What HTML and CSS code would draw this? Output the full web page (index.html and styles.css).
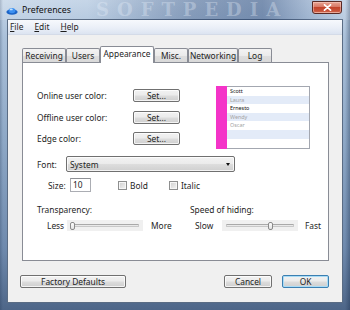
FILE: index.html
```html
<!DOCTYPE html>
<html>
<head>
<meta charset="utf-8">
<link rel="stylesheet" href="styles.css">
</head>
<body>
<div class="window">
  <div class="titlebar">
    <svg class="app-icon" width="12" height="8" viewBox="0 0 12 8">
      <ellipse cx="6" cy="5" rx="5.6" ry="2.8" fill="#1b63c6"/>
      <ellipse cx="6" cy="3.6" rx="3.4" ry="2.6" fill="#3b8ff0"/>
      <ellipse cx="5.2" cy="2.4" rx="1.6" ry="0.9" fill="#bfe0ff"/>
    </svg>
    <span class="title">Preferences</span>
    <span class="watermark">SOFTPEDIA</span>
    <button class="close" aria-label="Close">
      <svg width="9" height="7" viewBox="0 0 9 7"><path d="M1.5 0.8 L7.5 6.2 M7.5 0.8 L1.5 6.2" stroke="#fff" stroke-width="1.7" stroke-linecap="round"/></svg>
    </button>
  </div>
  <div class="client">
    <div class="menubar">
      <span class="menu-item"><u>F</u>ile</span>
      <span class="menu-item"><u>E</u>dit</span>
      <span class="menu-item"><u>H</u>elp</span>
    </div>
    <div class="body">
      <div class="tabs">
        <span class="tab t-receiving">Receiving</span>
        <span class="tab t-users">Users</span>
        <span class="tab t-appearance active">Appearance</span>
        <span class="tab t-misc">Misc.</span>
        <span class="tab t-networking">Networking</span>
        <span class="tab t-log">Log</span>
      </div>
      <div class="panel">
        <div class="colors-section">
          <div class="color-rows">
            <div class="color-row"><span class="row-label">Online user color:</span><button class="btn set-btn">Set...</button></div>
            <div class="color-row"><span class="row-label">Offline user color:</span><button class="btn set-btn">Set...</button></div>
            <div class="color-row"><span class="row-label">Edge color:</span><button class="btn set-btn">Set...</button></div>
          </div>
          <div class="preview">
            <div class="edge"></div>
            <ul class="user-list">
              <li class="on">Scott</li>
              <li class="off alt">Laura</li>
              <li class="on">Ernesto</li>
              <li class="off alt">Wendy</li>
              <li class="off">Oscar</li>
              <li class="alt"></li>
              <li></li>
            </ul>
          </div>
        </div>
        <div class="font-row">
          <span class="font-label">Font:</span>
          <div class="combo"><span>System</span><span class="arrow"></span></div>
        </div>
        <div class="size-row">
          <span class="size-label">Size:</span>
          <span class="size-input">10</span>
          <label class="check bold-check"><span class="box"></span>Bold</label>
          <label class="check"><span class="box"></span>Italic</label>
        </div>
        <div class="sliders">
          <div class="slider-group first">
            <div class="slider-title">Transparency:</div>
            <div class="slider-row">
              <span class="end-label less">Less</span>
              <div class="track"><span class="line"></span><span class="thumb" style="left:3px"></span></div>
              <span class="end-label more">More</span>
            </div>
          </div>
          <div class="slider-group second">
            <div class="slider-title">Speed of hiding:</div>
            <div class="slider-row">
              <span class="end-label slow">Slow</span>
              <div class="track"><span class="line"></span><span class="thumb" style="left:46px"></span></div>
              <span class="end-label fast">Fast</span>
            </div>
          </div>
        </div>
      </div>
      <div class="footer">
        <button class="btn factory">Factory Defaults</button>
        <span class="spacer"></span>
        <button class="btn cancel">Cancel</button>
        <button class="btn ok">OK</button>
      </div>
    </div>
  </div>
</div>
</body>
</html>
```

FILE: styles.css
```css
* { box-sizing: border-box; }
html, body { margin: 0; padding: 0; }
body {
  width: 350px;
  height: 310px;
  overflow: hidden;
  font-family: "Noto Sans", "DejaVu Sans", sans-serif;
  font-size: 8.4px;
  color: #1e1e1e;
  background: #5a7396;
}
button { font: inherit; color: inherit; padding: 0; margin: 0; }

.window {
  position: relative;
  width: 350px;
  height: 310px;
  display: flex;
  flex-direction: column;
  background:
    linear-gradient(90deg, rgba(30,50,80,.25) 0, rgba(30,50,80,0) 3px, rgba(0,0,0,0) 345px, rgba(20,40,70,.35) 350px),
    linear-gradient(180deg, #c6d6e8 0%, #aac0d9 12%, #8ea8c6 45%, #6f8aad 80%, #4e6688 100%);
}

/* title bar */
.titlebar {
  position: relative;
  height: 20px;
  display: flex;
  align-items: center;
  padding-left: 6px;
  overflow: hidden;
  background: linear-gradient(90deg, rgba(255,255,255,.15) 0%, rgba(255,255,255,0) 25%, rgba(30,60,110,.35) 55%, rgba(30,60,110,.45) 75%, rgba(60,90,140,.2) 88%, rgba(255,255,255,.1) 100%);
}
.app-icon { flex: none; margin-top: 1px; }
.title {
  margin-left: 4px;
  font-size: 8.8px;
  color: #111;
  position: relative;
  z-index: 1;
}
.watermark {
  position: absolute;
  left: 96px;
  top: 0;
  height: 20px;
  line-height: 20px;
  font-family: "DejaVu Serif", serif;
  font-weight: bold;
  font-size: 18px;
  letter-spacing: 8px;
  color: rgba(235,242,252,.32);
  white-space: nowrap;
}
.close {
  position: absolute;
  right: 8px;
  top: 1px;
  width: 30px;
  height: 13px;
  border: 1px solid #5a2a25;
  border-radius: 0 0 3px 3px;
  background: linear-gradient(180deg, #e8a493 0%, #d77764 45%, #c3442c 50%, #c9553c 85%, #e0937d 100%);
  box-shadow: inset 0 0 0 1px rgba(255,220,210,.45);
  display: flex;
  align-items: center;
  justify-content: center;
  z-index: 1;
}

/* client */
.client {
  flex: 1;
  margin: 0 8px 8px;
  display: flex;
  flex-direction: column;
  background: #f0f0f0;
  box-shadow: 0 0 0 1px #5a6c84;
}
.menubar {
  height: 15px;
  display: flex;
  align-items: center;
  gap: 11px;
  padding-left: 2px;
  background: linear-gradient(180deg, #f7f9fd 0%, #e9eef7 60%, #dce4f1 100%);
  border-bottom: 1px solid #d4dbe8;
}
.menu-item { line-height: 14px; }
.menu-item u { text-decoration-thickness: 1px; text-underline-offset: 1px; }

.body {
  flex: 1;
  display: flex;
  flex-direction: column;
  padding: 11px 13px 13px 14px;
}

/* tabs */
.tabs {
  height: 16px;
  display: flex;
  align-items: flex-end;
  position: relative;
  z-index: 1;
}
.tab {
  height: 14px;
  line-height: 13px;
  text-align: center;
  border: 1px solid #898c95;
  border-bottom: none;
  border-radius: 2px 2px 0 0;
  background: linear-gradient(180deg, #f3f3f3 0%, #ebebeb 50%, #dedede 51%, #d9d9d9 100%);
  white-space: nowrap;
}
.tab.active {
  height: 17px;
  margin-bottom: -1px;
  line-height: 14px;
  background: #fff;
}
.t-receiving { width: 44px; }
.t-users { width: 34px; }
.t-appearance { width: 54px; }
.t-misc { width: 34px; }
.t-networking { width: 50px; }
.t-log { width: 34px; }

/* panel */
.panel {
  height: 199px;
  width: 307px;
  border: 1px solid #898c95;
  background: #fff;
  padding-top: 23px;
}
.colors-section {
  display: flex;
  align-items: flex-start;
}
.color-rows {
  padding: 3px 0 0 14px;
  display: flex;
  flex-direction: column;
  gap: 8.5px;
}
.color-row {
  display: flex;
  align-items: center;
  height: 13px;
}
.row-label { width: 96px; }

.btn {
  height: 13px;
  line-height: 11px;
  text-align: center;
  border: 1px solid #707070;
  border-radius: 2px;
  background: linear-gradient(180deg, #f2f2f2 0%, #ebebeb 48%, #dddddd 52%, #cfcfcf 100%);
  box-shadow: inset 0 0 0 1px rgba(255,255,255,.75);
}
.set-btn { width: 47px; }

.preview {
  margin-left: 36px;
  display: flex;
  height: 63px;
}
.edge { width: 11px; background: #f434c8; }
.user-list {
  list-style: none;
  margin: 0;
  padding: 0;
  width: 83px;
  border: 1px solid #a3a7b0;
  border-left: none;
  overflow: hidden;
  font-size: 5.4px;
}
.user-list li {
  height: 8.6px;
  line-height: 8.6px;
  padding-left: 3px;
  background: #fff;
}
.user-list li.alt { background: #e3ebf8; }
.user-list li.on { color: #111; }
.user-list li.off { color: #a3a3a3; }

.font-row {
  margin-top: 7px;
  padding-left: 14px;
  display: flex;
  align-items: center;
  height: 16px;
}
.font-label { width: 29px; }
.combo {
  width: 169px;
  height: 16px;
  border: 1px solid #707070;
  border-radius: 2px;
  background: linear-gradient(180deg, #f2f2f2 0%, #ebebeb 48%, #dddddd 52%, #cfcfcf 100%);
  box-shadow: inset 0 0 0 1px rgba(255,255,255,.75);
  display: flex;
  align-items: center;
  justify-content: space-between;
  padding: 0 4px 0 3px;
}
.arrow {
  width: 0;
  height: 0;
  border-left: 2.5px solid transparent;
  border-right: 2.5px solid transparent;
  border-top: 3px solid #111;
}

.size-row {
  margin-top: 6px;
  padding-left: 25px;
  display: flex;
  align-items: center;
  height: 14px;
}
.size-label { width: 22px; }
.size-input {
  width: 21px;
  height: 14px;
  line-height: 12px;
  border: 1px solid #abadb3;
  border-top-color: #8e9095;
  background: #fff;
  padding-left: 2px;
}
.check {
  display: flex;
  align-items: center;
  gap: 2px;
}
.bold-check { margin-left: 27px; width: 51px; }
.box {
  width: 9px;
  height: 9px;
  border: 1px solid #8e8f8f;
  background: linear-gradient(135deg, #cfcfcf 0%, #f4f4f4 100%);
  box-shadow: inset 0 0 0 1px #f6f6f6;
  margin-right: 1px;
}

.sliders {
  margin-top: 12px;
  padding-left: 14px;
  display: flex;
}
.slider-group.first { width: 153px; }
.slider-title { height: 11px; line-height: 11px; }
.slider-row {
  margin-top: 5px;
  display: flex;
  align-items: center;
  height: 11px;
}
.first .slider-row { padding-left: 10px; }
.second .slider-row { padding-left: 5px; }
.less { width: 20px; }
.slow { width: 27px; }
.track {
  position: relative;
  width: 76px;
  height: 11px;
  background: #f0f0f0;
}
.line {
  position: absolute;
  left: 4px;
  right: 4px;
  top: 4px;
  height: 3px;
  border: 1px solid #c8c8c8;
  border-top-color: #a9a9a9;
  background: #e9e9e9;
  border-radius: 1px;
}
.thumb {
  position: absolute;
  top: 1.5px;
  width: 5px;
  height: 8px;
  border: 1px solid #8a8a8a;
  border-radius: 2px;
  background: linear-gradient(180deg, #fdfdfd 0%, #e3e3e3 100%);
}
.more { margin-left: 8px; }
.fast { margin-left: 7px; }

.footer {
  margin-top: 14px;
  margin-left: -2px;
  display: flex;
  align-items: center;
}
.factory { width: 106px; }
.spacer { flex: 1; }
.cancel { width: 48px; }
.ok {
  width: 47px;
  margin-left: 10px;
  border-color: #3c7fb1;
  box-shadow: inset 0 0 0 1px #a8dcf7;
}
```
